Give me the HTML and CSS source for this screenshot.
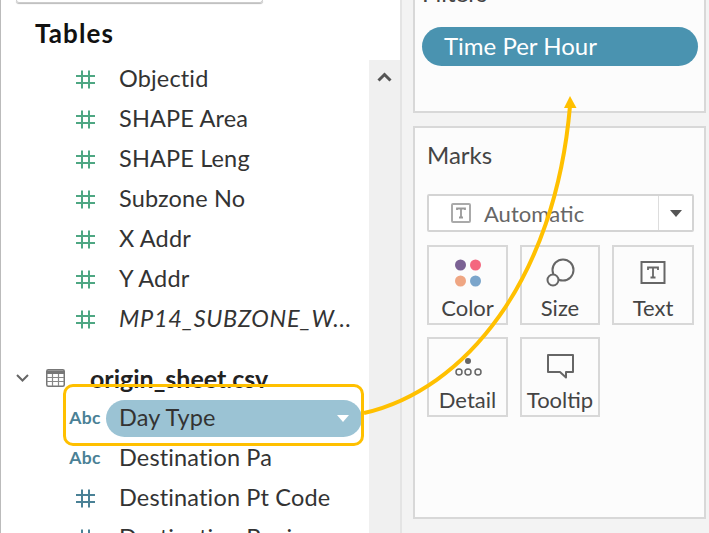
FILE: index.html
```html
<!DOCTYPE html>
<html lang="en">
<head>
    <meta charset="UTF-8">
    <meta name="viewport" content="width=device-width, initial-scale=1.0">
    <title>Tableau data pane</title>
    <link rel="stylesheet" href="styles.css">
</head>
<body>
    <svg width="0" height="0" class="defs">
        <symbol id="hash" viewBox="0 0 19 19">
            <path d="M6 0.5V18.5M13 0.5V18.5M0 6H19M0 13H19" fill="none" stroke="currentColor" stroke-width="2"/>
        </symbol>
    </svg>

    <div class="page">
        <div class="sidebar">
            <div class="pane">
                <div class="search"></div>
                <h2 class="pane-title">Tables</h2>

                <div class="field measure"><span class="type"><svg class="hash"><use href="#hash"/></svg></span><span class="name">Objectid</span></div>
                <div class="field measure"><span class="type"><svg class="hash"><use href="#hash"/></svg></span><span class="name">SHAPE Area</span></div>
                <div class="field measure"><span class="type"><svg class="hash"><use href="#hash"/></svg></span><span class="name">SHAPE Leng</span></div>
                <div class="field measure"><span class="type"><svg class="hash"><use href="#hash"/></svg></span><span class="name">Subzone No</span></div>
                <div class="field measure"><span class="type"><svg class="hash"><use href="#hash"/></svg></span><span class="name">X Addr</span></div>
                <div class="field measure"><span class="type"><svg class="hash"><use href="#hash"/></svg></span><span class="name">Y Addr</span></div>
                <div class="field measure"><span class="type"><svg class="hash"><use href="#hash"/></svg></span><span class="name calc">MP14_SUBZONE_W...</span></div>

                <div class="table-head">
                    <svg class="chevron" viewBox="0 0 13 8"><path d="M1 1L6.5 6.5L12 1" fill="none" stroke="#666" stroke-width="2"/></svg>
                    <svg class="table-icon" viewBox="0 0 19 18">
                        <rect x="0.75" y="0.75" width="17.5" height="16.5" rx="1.5" fill="#fff" stroke="#777" stroke-width="1.5"/>
                        <path d="M1 1.5H18V5H1Z" fill="#777"/>
                        <path d="M1 8.5H18M1 12.5H18M6.5 5V17M12.5 5V17" stroke="#888" stroke-width="1.2"/>
                    </svg>
                    <span class="table-name">origin_sheet.csv</span>
                </div>

                <div class="field dim"><span class="type abc">Abc</span><span class="name pill-field">Day Type<i class="caret"></i></span></div>
                <div class="field dim"><span class="type abc">Abc</span><span class="name">Destination Pa</span></div>
                <div class="field dim"><span class="type"><svg class="hash"><use href="#hash"/></svg></span><span class="name">Destination Pt Code</span></div>
                <div class="field dim"><span class="type"><svg class="hash"><use href="#hash"/></svg></span><span class="name">Destination Begin</span></div>
            </div>
            <div class="scrollbar">
                <svg class="scroll-up" viewBox="0 0 15 10"><path d="M1.5 8.5L7.5 2.5L13.5 8.5" fill="none" stroke="#555" stroke-width="3"/></svg>
            </div>
        </div>

        <div class="shelves">
            <div class="card filters">
                <div class="card-title">Filters</div>
                <div class="filter-pill">Time Per Hour</div>
            </div>

            <div class="card marks">
                <div class="card-title">Marks</div>
                <div class="mark-select">
                    <span class="mark-value">
                        <svg class="auto-icon" viewBox="0 0 20 20">
                            <rect x="1" y="1" width="18" height="18" rx="1" fill="none" stroke="#aaa" stroke-width="2"/>
                            <path d="M6 7V5.5H14V7M10 5.5V14.5M8 14.5H12" fill="none" stroke="#999" stroke-width="1.8"/>
                        </svg>
                        Automatic
                    </span>
                    <span class="mark-arrow"><i></i></span>
                </div>
                <div class="mark-grid">
                    <div class="mark-btn">
                        <svg class="mark-icon" viewBox="0 0 40 30">
                            <circle cx="12.5" cy="7" r="5.5" fill="#7b6294"/>
                            <circle cx="27.5" cy="7" r="5.5" fill="#f4677f"/>
                            <circle cx="12.5" cy="23" r="5.5" fill="#efa683"/>
                            <circle cx="27.5" cy="23" r="5.5" fill="#7ba5cb"/>
                        </svg>
                        Color
                    </div>
                    <div class="mark-btn">
                        <svg class="mark-icon" viewBox="0 0 40 30">
                            <circle cx="23" cy="12" r="10.5" fill="none" stroke="#666" stroke-width="2"/>
                            <circle cx="13" cy="22" r="5.5" fill="#fcfcfc" stroke="#666" stroke-width="2"/>
                        </svg>
                        Size
                    </div>
                    <div class="mark-btn">
                        <svg class="mark-icon" viewBox="0 0 40 30">
                            <rect x="8.5" y="4" width="23" height="21" fill="none" stroke="#666" stroke-width="2"/>
                            <path d="M15 12V9.5H25V12M20 9.5V19.5M17.5 19.5H22.5" fill="none" stroke="#666" stroke-width="1.8"/>
                        </svg>
                        Text
                    </div>
                    <div class="mark-btn">
                        <svg class="mark-icon" viewBox="0 0 40 30">
                            <circle cx="20" cy="11" r="3" fill="#666"/>
                            <circle cx="11" cy="22" r="3" fill="none" stroke="#666" stroke-width="1.5"/>
                            <circle cx="20" cy="22" r="3" fill="none" stroke="#666" stroke-width="1.5"/>
                            <circle cx="30" cy="22" r="3" fill="none" stroke="#666" stroke-width="1.5"/>
                        </svg>
                        Detail
                    </div>
                    <div class="mark-btn">
                        <svg class="mark-icon" viewBox="0 0 40 30">
                            <path d="M8 5H33V22H26V27.5L20 22H8Z" fill="none" stroke="#666" stroke-width="2" stroke-linejoin="round"/>
                        </svg>
                        Tooltip
                    </div>
                </div>
            </div>
        </div>

        <!-- callout drawn on top of the screenshot -->
        <div class="highlight"></div>
        <svg class="callout" width="709" height="533" viewBox="0 0 709 533">
            <path d="M364 413C465 390 555 280 570 106" fill="none" stroke="#ffc000" stroke-width="4"/>
            <path d="M570 96L576.5 108H564Z" fill="#ffc000"/>
        </svg>
    </div>
</body>
</html>
```

FILE: styles.css
```css
* {
    box-sizing: border-box;
}
body {
    margin: 0;
    font-family: "Lato", sans-serif;
    color: #333;
    background-color: #fff;
}
.defs {
    display: block;
    height: 0;
}
.page {
    position: relative;
    display: flex;
    width: 709px;
    height: 533px;
    overflow: hidden;
}

/* data pane */
.sidebar {
    display: flex;
    width: 400px;
    height: 533px;
    border-left: 1px solid #bbb;
    background-color: #fff;
}
.pane {
    width: 368px;
}
.search {
    width: 247px;
    height: 3px;
    margin-left: 15px;
    border: 1px solid #ccc;
    border-top: none;
    border-radius: 0 0 3px 3px;
    box-shadow: 0 1px 1px #bbb;
}
.pane-title {
    height: 56px;
    margin: 0;
    padding: 14px 0 0 34px;
    font-size: 26px;
    line-height: 32px;
    font-weight: 700;
    letter-spacing: 1.1px;
    color: #111;
}
.field {
    display: flex;
    align-items: center;
    height: 40px;
    padding-left: 59px;
    padding-bottom: 2px;
    font-size: 23.5px;
    letter-spacing: 0.15px;
}
.type {
    display: flex;
    justify-content: center;
    width: 50px;
    margin-right: 9px;
}
.hash {
    display: block;
    width: 19px;
    height: 19px;
    margin-top: 2px;
}
.measure .type {
    color: #4ea783;
}
.dim .type {
    color: #4a8196;
}
.abc {
    font-size: 17.5px;
    font-weight: 700;
    letter-spacing: 0.3px;
    color: #5089a3;
}
.calc {
    font-style: italic;
    letter-spacing: 0.7px;
}
.table-head {
    display: flex;
    align-items: center;
    height: 40px;
    margin-top: 19px;
    padding-left: 15px;
}
.chevron {
    width: 13px;
    height: 8px;
    margin-right: 17px;
}
.table-icon {
    width: 19px;
    height: 18px;
    margin-right: 25px;
}
.table-name {
    font-size: 25px;
    font-weight: 700;
    color: #222;
}
.pill-field {
    position: relative;
    width: 256px;
    height: 37px;
    margin-top: 2px;
    margin-left: -13px;
    padding-left: 13px;
    line-height: 35px;
    border-radius: 19px;
    background-color: #9bc3d4;
}
.caret {
    position: absolute;
    top: 15px;
    right: 13px;
    border-left: 6px solid transparent;
    border-right: 6px solid transparent;
    border-top: 7px solid #fff;
}
.scrollbar {
    width: 31px;
    margin-top: 60px;
    background-color: #f0f0f0;
}
.scroll-up {
    display: block;
    width: 15px;
    height: 10px;
    margin: 12px 0 0 8px;
}

/* shelves */
.shelves {
    width: 309px;
    height: 533px;
    padding: 0 3px 0 11px;
    border-left: 2px solid #e4e4e4;
    background-color: #f3f3f3;
}
.card {
    border: 2px solid #d8d8d8;
    background-color: #fcfcfc;
}
.card-title {
    font-size: 24px;
    line-height: 30px;
    color: #444;
}
.filters {
    height: 143px;
    margin-top: -30px;
    padding: 6px 7px;
}
.filter-pill {
    width: 276px;
    height: 39px;
    margin-top: 19px;
    padding-left: 22px;
    border-radius: 20px;
    font-size: 24px;
    line-height: 38px;
    color: #fff;
    background-color: #4a93b0;
}
.marks {
    height: 393px;
    margin-top: 13px;
    padding: 12px 12px;
}
.mark-select {
    display: flex;
    width: 267px;
    height: 38px;
    margin-top: 24px;
    border: 2px solid #d4d4d4;
    border-radius: 2px;
    background-color: #fff;
    color: #666;
    font-size: 22px;
}
.mark-value {
    display: flex;
    align-items: center;
    flex: 1;
    padding-left: 22px;
    border-right: 1px solid #ddd;
}
.auto-icon {
    width: 20px;
    height: 20px;
    margin-right: 13px;
}
.mark-arrow {
    display: flex;
    align-items: center;
    justify-content: center;
    width: 33px;
}
.mark-arrow i {
    border-left: 6px solid transparent;
    border-right: 6px solid transparent;
    border-top: 7px solid #555;
}
.mark-grid {
    display: grid;
    grid-template-columns: 81px 80px 82px;
    grid-auto-rows: 80px;
    column-gap: 12px;
    row-gap: 12px;
    margin-top: 13px;
}
.mark-btn {
    display: flex;
    flex-direction: column;
    align-items: center;
    padding-top: 11px;
    border: 2px solid #d8d8d8;
    font-size: 22px;
    line-height: 28px;
    color: #444;
}
.mark-icon {
    display: block;
    width: 40px;
    height: 30px;
    margin-bottom: 6px;
}

/* callout over the pane */
.highlight {
    position: absolute;
    left: 63px;
    top: 384px;
    width: 301px;
    height: 62px;
    border: 3px solid #ffc000;
    border-radius: 10px;
}
.callout {
    position: absolute;
    left: 0;
    top: 0;
    pointer-events: none;
}
```
